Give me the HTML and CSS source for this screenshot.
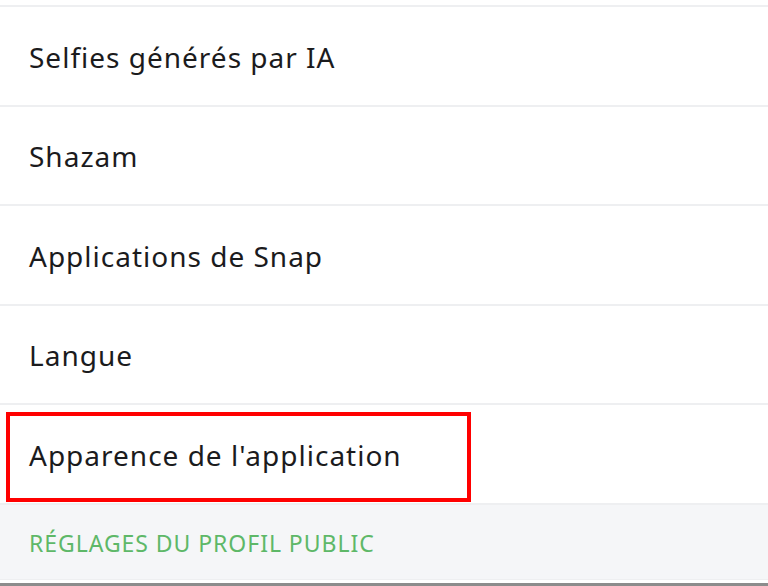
FILE: index.html
```html
<!DOCTYPE html>
<html lang="fr">
<head>
<meta charset="utf-8">
<link rel="stylesheet" href="styles.css">
</head>
<body>
<div class="screen">
  <ul class="list">
    <li class="row">Selfies générés par IA</li>
    <li class="row">Shazam</li>
    <li class="row">Applications de Snap</li>
    <li class="row">Langue</li>
    <li class="row highlighted">Apparence de l'application</li>
  </ul>
  <div class="section-header">RÉGLAGES DU PROFIL PUBLIC</div>
  <div class="bottom-gap"></div>
  <div class="bottom-edge"></div>
</div>
</body>
</html>
```
FILE: styles.css
```css
*, *::before, *::after { box-sizing: border-box; }
html, body { margin: 0; padding: 0; background: #ffffff; }
body { font-family: "Noto Sans", "Open Sans", sans-serif; }
.screen {
  width: 768px;
  height: 586px;
  overflow: hidden;
  display: flex;
  flex-direction: column;
  padding-top: 5px;
}
.list { list-style: none; margin: 0; padding: 0; flex: none; }
.row {
  height: 99.5px;
  border-top: 2px solid #eeeff1;
  display: flex;
  align-items: center;
  padding-left: 29px;
  padding-top: 2px;
  font-size: 28px;
  letter-spacing: 1px;
  color: #1b1b1d;
}
.highlighted { position: relative; }
.highlighted::after {
  content: "";
  position: absolute;
  left: 6px;
  top: 7px;
  width: 465px;
  height: 90px;
  border: 4px solid #ff0000;
}
.section-header {
  flex: none;
  height: 77.5px;
  background: #f5f6f8;
  border-top: 2px solid #eeeff1;
  border-bottom: 1px solid #eeeff1;
  display: flex;
  align-items: center;
  padding-left: 29px;
  padding-top: 2px;
  font-size: 23px;
  letter-spacing: 0.95px;
  color: #5eb868;
}
.bottom-gap { flex: none; height: 2.5px; background: #ffffff; }
.bottom-edge { flex: 1; background: #8c8c8c; }
```
